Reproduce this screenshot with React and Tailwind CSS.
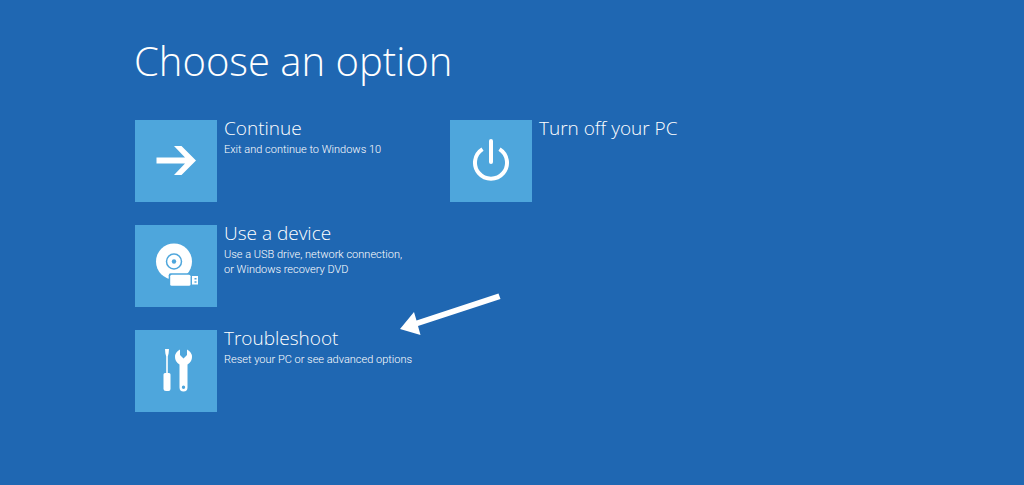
import React from 'react';

const ArrowIcon = () => (
  <svg viewBox="0 0 82 82" className="w-full h-full" fill="white" aria-hidden="true">
    <path d="M21.5 37.5H50L39 26H46.500L61 40.500L46.500 55H39L50 43.500H21.5Z" />
  </svg>
);

const DeviceIcon = () => (
  <svg viewBox="0 0 82 82" className="w-full h-full" aria-hidden="true">
    <circle cx="39" cy="36.500" r="18" fill="white" />
    <circle cx="39" cy="36.500" r="7.500" fill="none" stroke="#4ea6dc" strokeWidth="1.500" />
    <circle cx="39" cy="36.500" r="2.200" fill="#4ea6dc" />
    {/* USB stick in front of the disc */}
    <rect x="33.700" y="48.300" width="22.300" height="13" rx="2" fill="#4ea6dc" />
    <rect x="35.200" y="49.800" width="20.300" height="11" rx="1.500" fill="white" />
    <rect x="57" y="51" width="6" height="8.500" fill="white" />
    <path d="M59.500 53h2v1.500h-2zM59.500 56.200h2v1.500h-2z" fill="#4ea6dc" />
  </svg>
);

const ToolsIcon = () => (
  <svg viewBox="0 0 82 82" className="w-full h-full" fill="white" aria-hidden="true">
    <path d="M30 19h4l-.4 4.500-.8 3V43H34q1.500 0 1.500 1.500V59q0 2-2 2H31q-2.500 0-2.500-2V44.500q0-1.500 1.500-1.500h1.200V26.500l-.8-3Z" />
    <path
      fillRule="evenodd"
      d="M45 19.500V25l3.500 3.500 3.500-3.500v-5.500q5 2.500 5 7.500 0 5-4.500 7.500V57.500a4 4 0 0 1-8 0V34.500Q40 32 40 27q0-5 5-7.500ZM48.500 55.500a1.700 1.700 0 1 0 0 3.400 1.700 1.700 0 0 0 0-3.400Z"
    />
  </svg>
);

const PowerIcon = () => (
  <svg viewBox="0 0 82 82" className="w-full h-full" fill="none" stroke="white" strokeWidth="4" aria-hidden="true">
    <path d="M41 21V42" strokeLinecap="round" />
    <path d="M32.500 29.100A16 16 0 1 0 49.500 29.100" />
  </svg>
);

const Option = ({ icon, title, children }) => (
  <button type="button" className="flex items-start gap-[7px] text-left text-white cursor-pointer">
    <span className="block shrink-0 size-[82px] bg-[#4ea6dc]">{icon}</span>
    <span className="block">
      <span className="block text-[19px] leading-4 font-light">{title}</span>
      {children && (
        <span className="block mt-1.5 text-[11px] leading-[15px] font-light font-['Roboto','Segoe_UI',sans-serif]">
          {children}
        </span>
      )}
    </span>
  </button>
);

const Pointer = () => (
  <svg
    viewBox="0 0 102 44"
    className="absolute left-[265px] -top-[38px] w-[102px] h-[44px]"
    fill="white"
    aria-hidden="true"
  >
    <path d="M0 37L14 20L16.500 28.500L98.500 1.500L100.500 7L18 34L20.500 43Z" />
  </svg>
);

const App = () => (
  <main className="min-h-screen bg-[#1f67b2] pl-[134px] pr-8 pt-9 pb-10 font-['Open_Sans','Segoe_UI',sans-serif] text-white">
    <h1 className="text-[40px] leading-[50px] font-light">Choose an option</h1>

    <div className="mt-[34px] pl-px flex flex-wrap items-start gap-x-8">
      <div className="flex flex-col gap-[23px] min-w-[283px]">
        <Option icon={<ArrowIcon />} title="Continue">
          Exit and continue to Windows 10
        </Option>
        <Option icon={<DeviceIcon />} title="Use a device">
          Use a USB drive, network connection,
          <br />
          or Windows recovery DVD
        </Option>
        <div className="relative">
          <Option icon={<ToolsIcon />} title="Troubleshoot">
            Reset your PC or see advanced options
          </Option>
          <Pointer />
        </div>
      </div>

      <Option icon={<PowerIcon />} title="Turn off your PC" />
    </div>
  </main>
);

export default App;
